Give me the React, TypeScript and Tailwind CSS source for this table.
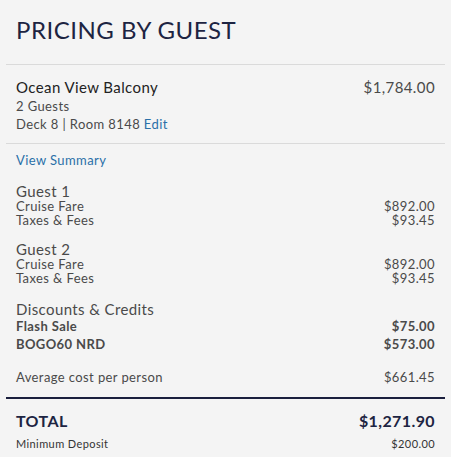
const guests = [
  { name: 'Guest 1', fare: '$892.00', taxes: '$93.45' },
  { name: 'Guest 2', fare: '$892.00', taxes: '$93.45' },
];

const discounts = [
  { label: 'Flash Sale', amount: '$75.00' },
  { label: 'BOGO60 NRD', amount: '$573.00' },
];

const App = () => {
  return (
    <div className="w-[451px] h-[457px] bg-[#f4f4f4] text-[#4a4a4a] font-['Lato',sans-serif] tracking-[0.4px] overflow-hidden">
      <h1 className="px-4 pt-[15px] pb-[19px] text-[24px] leading-[30px] font-normal tracking-[0.5px] text-[#1d2442]">
        PRICING BY GUEST
      </h1>

      <div className="mx-[6px] border-t border-[#dadada]">
        <div className="flex justify-between px-[10px] pt-[13px] pb-[10px]">
          <div>
            <div className="text-[15px] leading-[19px] text-[#222]">Ocean View Balcony</div>
            <div className="text-[13px] leading-[18px]">2 Guests</div>
            <div className="text-[13px] leading-[18px]">
              Deck 8 | Room 8148 <a className="text-[#2a70a8]">Edit</a>
            </div>
          </div>
          <div className="text-[15px] leading-[19px] text-[#4a4a4a]">$1,784.00</div>
        </div>
      </div>

      <div className="mx-[6px] border-t border-[#dadada] px-[10px]">
        <div className="pt-[7px] text-[13px] leading-[18px] text-[#2a70a8]">View Summary</div>

        {guests.map(g => (
          <div key={g.name} className="mt-[14px] text-[13px] leading-[14px]">
            <div className="text-[15px] leading-[16px]">{g.name}</div>
            <div className="flex justify-between">
              <span>Cruise Fare</span>
              <span>{g.fare}</span>
            </div>
            <div className="flex justify-between">
              <span>Taxes &amp; Fees</span>
              <span>{g.taxes}</span>
            </div>
          </div>
        ))}

        <div className="mt-[16px] text-[13px] leading-[18px]">
          <div className="text-[15px] leading-[16px]">Discounts &amp; Credits</div>
          {discounts.map(d => (
            <div key={d.label} className="flex justify-between font-bold">
              <span>{d.label}</span>
              <span>{d.amount}</span>
            </div>
          ))}
        </div>

        <div className="mt-[15px] pb-[11px] flex justify-between text-[13px] leading-[18px]">
          <span>Average cost per person</span>
          <span>$661.45</span>
        </div>
      </div>

      <div className="mx-[6px] border-t-2 border-[#1a1f3d] px-[10px] pt-[13px]">
        <div className="flex justify-between font-bold text-[16px] leading-[18px] text-[#1d2442]">
          <span>TOTAL</span>
          <span>$1,271.90</span>
        </div>
        <div className="mt-[7px] flex justify-between text-[11px] leading-[14px] text-[#333]">
          <span>Minimum Deposit</span>
          <span>$200.00</span>
        </div>
      </div>
    </div>
  );
};

export default App;
